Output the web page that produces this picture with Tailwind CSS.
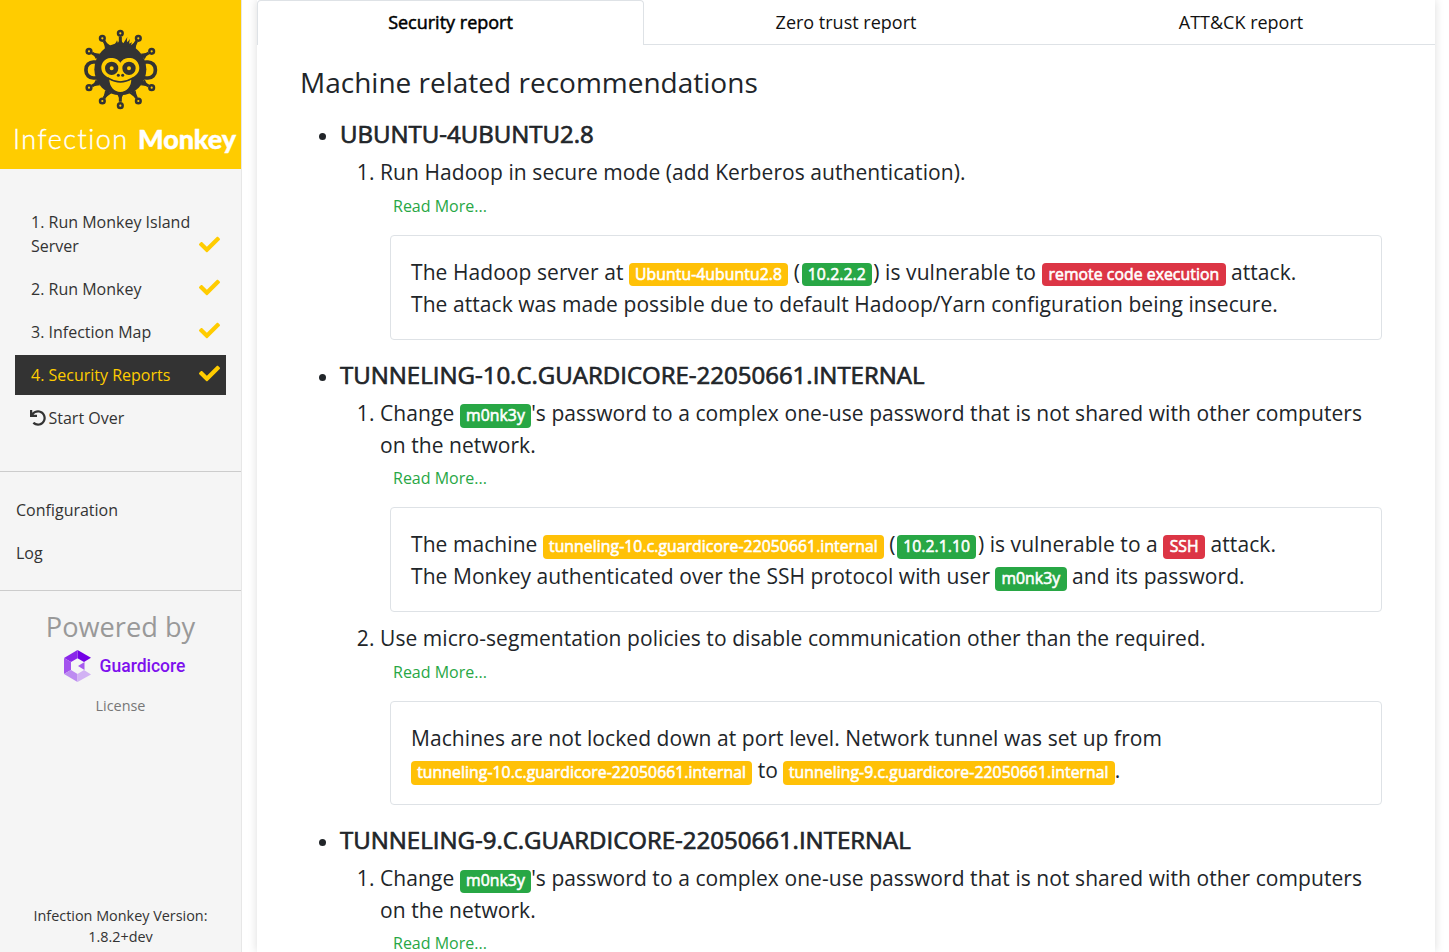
<!DOCTYPE html>
<html lang="en">
<head>
<meta charset="utf-8">
<title>Infection Monkey</title>
<script src="https://cdn.jsdelivr.net/npm/@tailwindcss/browser@4"></script>
</head>
<body class="flex h-[952px] overflow-hidden bg-white font-['Open_Sans',sans-serif] text-base text-[#212529]">
<svg class="hidden">
  <symbol id="check" viewBox="0 0 512 512"><path fill="currentColor" d="M173.898 439.404l-166.4-166.4c-9.997-9.997-9.997-26.206 0-36.204l36.203-36.204c9.997-9.998 26.207-9.998 36.204 0L192 312.69 432.095 72.596c9.997-9.997 26.207-9.997 36.204 0l36.203 36.204c9.997 9.997 9.997 26.206 0 36.204l-294.4 294.401c-9.998 9.997-26.207 9.997-36.204-.001z"/></symbol>
</svg>
<aside class="flex h-full w-[242px] shrink-0 flex-col border-r border-[#e7e7e7] bg-[#f5f5f5] font-['Open_Sans',sans-serif] text-[#333]">
  <header class="flex h-[169px] shrink-0 flex-col items-center bg-[#fc0] pt-5">
    <svg class="-ml-px h-[95px] w-[100px] shrink-0" viewBox="0 0 300 285">
      <g stroke="#333" stroke-width="9">
        <path d="M151 50V245M102 63 200 235M200 63 102 235M66 99 236 198M236 99 66 198"/>
      </g>
      <g fill="#333">
        <path d="M140 75 149 60H153L162 75ZM140 219 149 238H153L162 219ZM105 86 102 68 106 66 122 77ZM197 86 200 68 196 66 180 77ZM105 212 101 232 105 234 124 220ZM197 212 201 232 197 234 178 220ZM78 118 70 103 73 99 90 101ZM224 118 232 103 229 99 212 101ZM78 178 70 194 73 198 90 196ZM224 178 232 194 229 198 212 196Z"/>
      </g>
      <g fill="#fc0" stroke="#333" stroke-width="7.500">
        <circle cx="151" cy="40" r="7"/><circle cx="151" cy="257" r="7"/>
        <circle cx="97" cy="55" r="7"/><circle cx="205" cy="55" r="7"/>
        <circle cx="57" cy="94" r="7"/><circle cx="245" cy="94" r="7"/>
        <circle cx="57" cy="203" r="7"/><circle cx="245" cy="203" r="7"/>
        <circle cx="97" cy="243" r="7"/><circle cx="205" cy="243" r="7"/>
      </g>
      <g fill="#fc0" stroke="#333" stroke-width="11">
        <rect x="48" y="126" width="50" height="48" rx="22"/><rect x="206" y="126" width="50" height="48" rx="22"/>
      </g>
      <circle cx="151" cy="148" r="78" fill="#333"/>
      <path fill="#333" d="M125 78Q138 72 141 61L144 70 151 64 160 70 172 51Q169 62 172 67L180 57Q177 67 178 71L186 67 181 80Z"/>
      <path fill="#fc0" d="M151 128C143 115 130 113 121 114C105 115 93 129 94 145C95 160 106 169 116 173C126 188 176 188 186 173C196 169 207 160 208 145C208 129 197 115 181 114C172 113 159 115 151 128Z"/>
      <g fill="#fc0" stroke="#333" stroke-width="14"><circle cx="125" cy="145" r="13"/><circle cx="177" cy="145" r="13"/></g>
      <circle cx="145" cy="166" r="4.500" fill="#333"/><circle cx="158" cy="166" r="4.500" fill="#333"/>
      <path fill="#fc0" stroke="#333" stroke-width="4" d="M116 175Q151 197 186 175C188 232 114 232 116 175Z"/>
    </svg>
    <div class="flex w-full items-baseline whitespace-nowrap pl-[13px] font-[Lato] text-[27px] leading-[48px] text-white"><span class="w-[125px] font-light tracking-[1.5px] [-webkit-text-stroke:0.4px]">Infection</span><span class="font-black tracking-[-0.1px] [-webkit-text-stroke:0.4px]">Monkey</span></div>
  </header>
  <nav class="shrink-0 border-b border-[#ccc] px-[15px] pt-[33px] pb-[33px]">
    <ul class="flex flex-col gap-[3px]">
      <li class="flex items-end justify-between py-2 pr-[6px] pl-4"><span class="w-[168px]">1. Run Monkey Island Server</span><svg class="mb-[3px] size-[21px]"><use href="#check" class="text-[#fc0]"/></svg></li>
      <li class="flex items-end justify-between py-2 pr-[6px] pl-4"><span>2. Run Monkey</span><svg class="mb-[3px] size-[21px]"><use href="#check" class="text-[#fc0]"/></svg></li>
      <li class="flex items-end justify-between py-2 pr-[6px] pl-4"><span>3. Infection Map</span><svg class="mb-[3px] size-[21px]"><use href="#check" class="text-[#fc0]"/></svg></li>
      <li class="flex items-end justify-between bg-[#333] py-2 pr-[6px] pl-4 text-[#fc0]"><span>4. Security Reports</span><svg class="mb-[3px] size-[21px]"><use href="#check"/></svg></li>
      <li class="flex items-center py-2 pl-[15px]"><svg class="mr-[2.5px] size-4" viewBox="0 0 512 512"><path fill="currentColor" d="M212.333 224.333H12c-6.627 0-12-5.373-12-12V12C0 5.373 5.373 0 12 0h48c6.627 0 12 5.373 12 12v78.112C117.773 39.279 184.26 7.47 258.175 8.007c136.906.994 246.448 111.623 246.157 248.532C504.041 393.258 393.12 504 256.333 504c-64.089 0-122.496-24.313-166.51-64.215-5.099-4.622-5.334-12.554-.467-17.42l33.967-33.967c4.474-4.474 11.662-4.717 16.401-.525C170.76 415.336 211.58 432 256.333 432c97.268 0 176-78.716 176-176 0-97.267-78.716-176-176-176-58.496 0-110.28 28.476-142.274 72.333h98.274c6.627 0 12 5.373 12 12v48c0 6.627-5.373 12-12 12z"/></svg><span>Start Over</span></li>
    </ul>
  </nav>
  <ul class="flex shrink-0 flex-col gap-[3px] border-b border-[#ccc] px-4 pt-[18px] pb-[17px]">
    <li class="py-2">Configuration</li>
    <li class="py-2">Log</li>
  </ul>
  <div class="flex shrink-0 flex-col items-center pt-[15px]">
    <div class="text-[27.2px] leading-[42px] text-[#999]">Powered by</div>
    <div class="mt-px flex items-center pl-[7px]">
      <svg class="h-[34px] w-[29px]" viewBox="0 0 29 34">
        <path fill="#7300e6" d="M14.500 1 28 8.700 21 13 14.500 9.300Z"/><path fill="#8a26ea" d="M14.500 1V9.300L8 13 1 9Z"/>
        <path fill="#a453ee" d="M1 9 8 13V21L1 25Z"/><path fill="#bd8cf1" d="M1 25 8 21 14.500 25V33Z"/><path fill="#d2b2f4" d="M14.500 33V25L21 21 28 25.500Z"/><path fill="#a65bee" d="M15 17 21.500 13V21Z"/>
      </svg>
      <span class="ml-2 pt-px font-['Roboto'] text-[17.5px] leading-[25.5px] font-medium text-[#7d10ee]">Guardicore</span>
    </div>
    <div class="mt-[12px] text-[14.4px] leading-[21px] text-[#777]">License</div>
  </div>
  <div class="mt-auto mb-[5px] px-4 text-center text-[14.4px] leading-[21px]">Infection Monkey Version: 1.8.2+dev</div>
</aside>
<main class="ml-[15px] flex h-full w-[1178px] shrink-0 flex-col shadow-[0_0_9px_rgba(0,0,0,0.14)]">
  <div class="flex h-[45px] shrink-0 text-center text-[18px] leading-[44px] text-black">
    <div class="w-[387px] rounded-t border border-b-0 border-[#dee2e6] leading-[42px] [-webkit-text-stroke:0.5px]">Security report</div>
    <div class="w-[403px] border-b border-[#dee2e6] pl-px text-[#111]">Zero trust report</div>
    <div class="w-[388px] border-b border-[#dee2e6] text-[#111]">ATT&amp;CK report</div>
  </div>
  <section class="pr-[53px] pl-[43px] pt-[21px] text-[21px] leading-[31.5px]">
    <h3 class="mb-[20px] text-[28px] leading-[33.6px]">Machine related recommendations</h3>
    <ul class="list-disc pl-10">
      <li class="mb-[21.3px]">
        <h4 class="mb-[9px] text-2xl leading-[28.8px] [-webkit-text-stroke:0.7px]">UBUNTU-4UBUNTU2.8</h4>
        <ol class="list-decimal pl-10 tracking-[0.066px]">
          <li>Run Hadoop in secure mode (add Kerberos authentication).
            <div class="px-[13px] pt-[5px] pb-[7px] text-base leading-6 tracking-normal text-[#28a745]">Read More...</div>
            <div class="mt-[10px] ml-[10px] rounded border border-[#dee2e6] px-5 pt-5 pb-[19px] leading-8">The Hadoop server at <span class="inline-block rounded bg-[#ffc107] px-[6.1px] py-[3.7px] text-[15.75px] leading-none text-white [-webkit-text-stroke:0.6px]">Ubuntu-4ubuntu2.8</span> (<span class="ml-[1.8px] mr-[1.5px] inline-block rounded bg-[#28a745] px-[6.1px] py-[3.7px] text-[15.75px] leading-none text-white [-webkit-text-stroke:0.6px]">10.2.2.2</span>) is vulnerable to <span class="ml-[0.6px] inline-block rounded bg-[#dc3545] px-[6.3px] py-[3.7px] text-[15.75px] leading-none text-white [-webkit-text-stroke:0.6px]">remote code execution</span> attack.<br>The attack was made possible due to default Hadoop/Yarn configuration being insecure.</div>
          </li>
        </ol>
      </li>
      <li class="mb-[20.5px]">
        <h4 class="mb-[8.2px] text-2xl leading-[28.8px] [-webkit-text-stroke:0.7px]">TUNNELING-10.C.GUARDICORE-22050661.INTERNAL</h4>
        <ol class="list-decimal pl-10 tracking-[0.066px]">
          <li class="mb-[10.5px]">Change <span class="inline-block rounded bg-[#28a745] px-[6.3px] py-[3.7px] text-[15.75px] leading-none text-white [-webkit-text-stroke:0.6px]">m0nk3y</span>'s password to a complex one-use password that is not shared with other computers on the network.
            <div class="px-[13px] pt-[5px] pb-[7px] text-base leading-6 tracking-normal text-[#28a745]">Read More...</div>
            <div class="mt-[10px] ml-[10px] rounded border border-[#dee2e6] px-5 pt-5 pb-[19px] leading-8">The machine <span class="inline-block rounded bg-[#ffc107] px-[6px] py-[3.7px] text-[15.75px] leading-none text-white [-webkit-text-stroke:0.6px]">tunneling-10.c.guardicore-22050661.internal</span> (<span class="ml-[1.4px] mr-[1.5px] inline-block rounded bg-[#28a745] px-[6.2px] py-[3.7px] text-[15.75px] leading-none text-white [-webkit-text-stroke:0.6px]">10.2.1.10</span>) is vulnerable to a <span class="inline-block rounded bg-[#dc3545] px-[6.3px] py-[3.7px] text-[15.75px] leading-none text-white [-webkit-text-stroke:0.6px]">SSH</span> attack.<br>The Monkey authenticated over the SSH protocol with user <span class="-ml-[0.5px] inline-block rounded bg-[#28a745] px-[6.3px] py-[3.7px] text-[15.75px] leading-none text-white [-webkit-text-stroke:0.6px]">m0nk3y</span> and its password.</div>
          </li>
          <li>Use micro-segmentation policies to disable communication other than the required.
            <div class="px-[13px] pt-[6px] pb-[7px] text-base leading-6 tracking-normal text-[#28a745]">Read More...</div>
            <div class="mt-[10px] ml-[10px] rounded border border-[#dee2e6] px-5 pt-5 pb-[18px] leading-8">Machines are not locked down at port level. Network tunnel was set up from<br><span class="inline-block rounded bg-[#ffc107] px-[6.2px] py-[3.7px] text-[15.75px] leading-none text-white [-webkit-text-stroke:0.6px]">tunneling-10.c.guardicore-22050661.internal</span> to <span class="-ml-[0.6px] inline-block rounded bg-[#ffc107] px-[6px] py-[3.7px] text-[15.75px] leading-none text-white [-webkit-text-stroke:0.6px]">tunneling-9.c.guardicore-22050661.internal</span>.</div>
          </li>
        </ol>
      </li>
      <li>
        <h4 class="mb-[9px] text-2xl leading-[28.8px] [-webkit-text-stroke:0.7px]">TUNNELING-9.C.GUARDICORE-22050661.INTERNAL</h4>
        <ol class="list-decimal pl-10 tracking-[0.066px]">
          <li>Change <span class="inline-block rounded bg-[#28a745] px-[6.3px] py-[3.7px] text-[15.75px] leading-none text-white [-webkit-text-stroke:0.6px]">m0nk3y</span>'s password to a complex one-use password that is not shared with other computers on the network.
            <div class="px-[13px] pt-[5px] pb-[7px] text-base leading-6 tracking-normal text-[#28a745]">Read More...</div>
          </li>
        </ol>
      </li>
    </ul>
  </section>
</main>
</body>
</html>
